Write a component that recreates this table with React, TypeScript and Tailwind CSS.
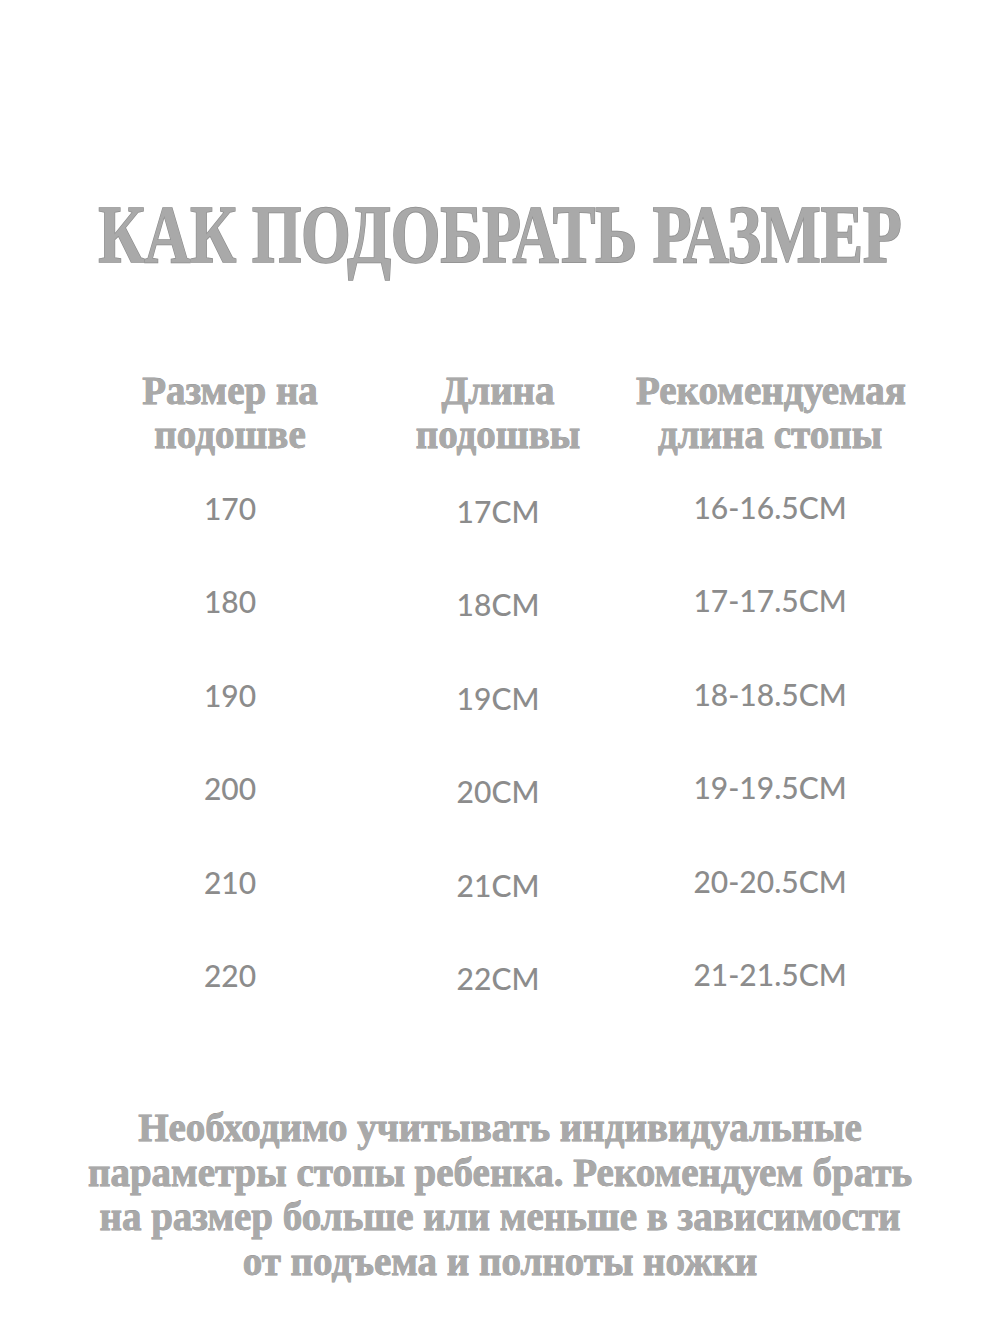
const rows = [
  ["170", "17CM", "16-16.5CM"],
  ["180", "18CM", "17-17.5CM"],
  ["190", "19CM", "18-18.5CM"],
  ["200", "20CM", "19-19.5CM"],
  ["210", "21CM", "20-20.5CM"],
  ["220", "22CM", "21-21.5CM"],
];

const serif =
  "font-['Liberation_Serif',serif] font-bold text-[#a9a9a9] [-webkit-text-stroke:0.8px_#959595] [paint-order:stroke_fill]";

export default function App() {
  return (
    <div className="flex h-[1333px] w-[1000px] flex-col items-center overflow-hidden bg-white">
      <h1
        className={`${serif} mt-[194px] inline-block scale-x-[0.78] whitespace-nowrap text-[82px] leading-[82px] tracking-[-0.5px] [-webkit-text-stroke:1.6px_#8e8e8e]`}
      >
        КАК ПОДОБРАТЬ РАЗМЕР
      </h1>

      <div className="mt-[93px] grid grid-cols-[260px_276px_268px] self-start pl-[100px]">
        <div className={`${serif} text-center text-[39px] leading-[44px]`}>
          Размер на
          <br />
          подошве
        </div>
        <div className={`${serif} text-center text-[39px] leading-[44px]`}>
          Длина
          <br />
          подошвы
        </div>
        <div className={`${serif} text-center text-[39px] leading-[44px]`}>
          Рекомендуемая
          <br />
          длина стопы
        </div>

        <div className="col-span-3 mt-[31px]">
          {rows.map((r) => (
            <div
              key={r[0]}
              className="grid h-[93.4px] grid-cols-[260px_276px_268px] font-['Lato',sans-serif] text-[30px] font-medium leading-[40px] text-[#8c8c8c]"
            >
              <div className="text-center">{r[0]}</div>
              <div className="pt-[3px] text-center">{r[1]}</div>
              <div className="-mt-[1px] text-center">{r[2]}</div>
            </div>
          ))}
        </div>
      </div>

      <p
        className={`${serif} mt-[58px] whitespace-nowrap text-center text-[39px] leading-[44.5px]`}
      >
        Необходимо учитывать индивидуальные
        <br />
        параметры стопы ребенка. Рекомендуем брать
        <br />
        на размер больше или меньше в зависимости
        <br />
        от подъема и полноты ножки
      </p>
    </div>
  );
}
